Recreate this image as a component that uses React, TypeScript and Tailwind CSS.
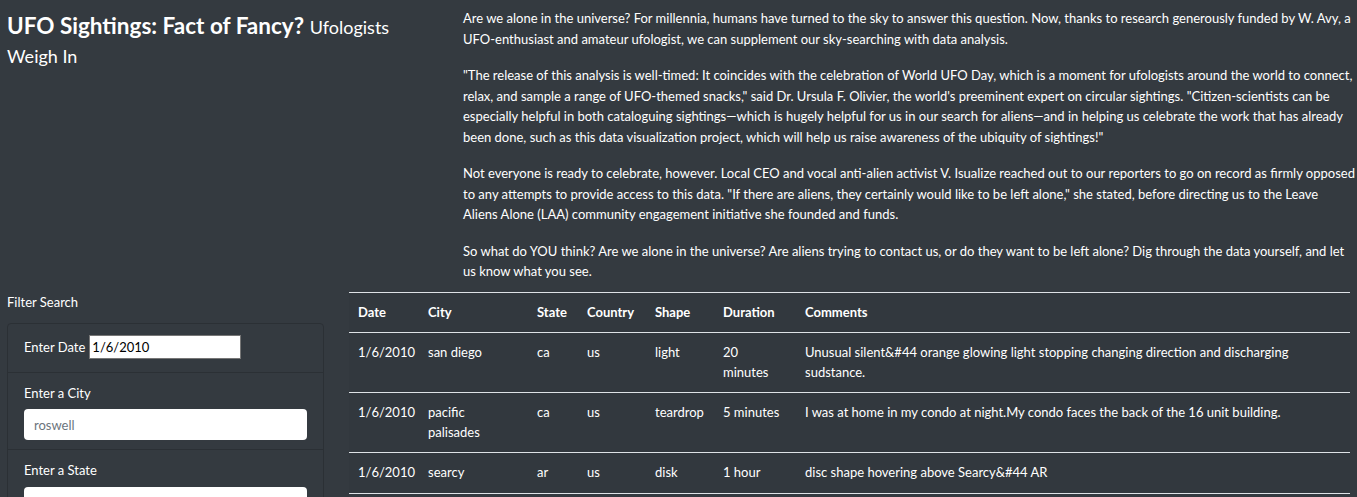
// intro copy, broken where the original page wraps
const paragraphs = [
  [
    "Are we alone in the universe? For millennia, humans have turned to the sky to answer this question. Now, thanks to research generously funded by W. Avy, a",
    "UFO-enthusiast and amateur ufologist, we can supplement our sky-searching with data analysis.",
  ],
  [
    "\"The release of this analysis is well-timed: It coincides with the celebration of World UFO Day, which is a moment for ufologists around the world to connect,",
    "relax, and sample a range of UFO-themed snacks,\" said Dr. Ursula F. Olivier, the world's preeminent expert on circular sightings. \"Citizen-scientists can be",
    "especially helpful in both cataloguing sightings\u2014which is hugely helpful for us in our search for aliens\u2014and in helping us celebrate the work that has already",
    "been done, such as this data visualization project, which will help us raise awareness of the ubiquity of sightings!\"",
  ],
  [
    "Not everyone is ready to celebrate, however. Local CEO and vocal anti-alien activist V. Isualize reached out to our reporters to go on record as firmly opposed",
    "to any attempts to provide access to this data. \"If there are aliens, they certainly would like to be left alone,\" she stated, before directing us to the Leave",
    "Aliens Alone (LAA) community engagement initiative she founded and funds.",
  ],
  [
    "So what do YOU think? Are we alone in the universe? Are aliens trying to contact us, or do they want to be left alone? Dig through the data yourself, and let",
    "us know what you see.",
  ],
];

const sightings = [
  {
    date: "1/6/2010",
    city: "san diego",
    state: "ca",
    country: "us",
    shape: "light",
    duration: "20 minutes",
    comments:
      "Unusual silent&#44 orange glowing light stopping changing direction and discharging sudstance.",
  },
  {
    date: "1/6/2010",
    city: "pacific palisades",
    state: "ca",
    country: "us",
    shape: "teardrop",
    duration: "5 minutes",
    comments: "I was at home in my condo at night.My condo faces the back of the 16 unit building.",
  },
  {
    date: "1/6/2010",
    city: "searcy",
    state: "ar",
    country: "us",
    shape: "disk",
    duration: "1 hour",
    comments: "disc shape hovering above Searcy&#44 AR",
  },
];

const columns = ["Date", "City", "State", "Country", "Shape", "Duration", "Comments"];

export default function App() {
  return (
    <div className="min-h-screen bg-[#343a40] text-white font-['Lato',sans-serif] text-[13px] leading-[1.5]">
      <div className="flex">
        <div className="w-[452px] shrink-0 px-[7px] pt-[12px]">
          <h1 className="max-w-[410px] text-[22.5px] leading-[27px]">
            <span className="font-bold">UFO Sightings: Fact of Fancy?</span>{" "}
            <span className="text-[18px]">Ufologists</span>{" "}
            <span className="text-[18px]">Weigh In</span>
          </h1>
        </div>
        <div className="flex-1 pl-[11px] pr-[7px] pt-[8px]">
          {paragraphs.map((lines, i) => (
            <p key={i} className="leading-[20.5px] mb-[16px] last:mb-0">
              {lines.map((line, j) => (
                <span key={j} className="block whitespace-nowrap">
                  {line}
                </span>
              ))}
            </p>
          ))}
        </div>
      </div>

      <div className="flex mt-[10px]">
        <div className="w-[339px] shrink-0 pl-[7px] pr-[15px]">
          <div className="leading-[20px] mb-[11px]">Filter Search</div>
          <ul className="border border-[#2b3035] rounded-[4px]">
            <li className="px-[16px] pt-[11px] pb-[13px] border-b border-[#2b3035] flex items-center">
              <label className="mr-[4px] mt-[2px]">Enter Date</label>
              <input
                className="w-[152px] h-[24px] bg-white text-black border border-[#767676] px-[2px] outline-none"
                defaultValue="1/6/2010"
              />
            </li>
            <li className="px-[16px] pt-[11px] pb-[9px] border-b border-[#2b3035]">
              <label className="block mb-[6px]">Enter a City</label>
              <input
                className="w-full h-[31px] bg-white rounded-[4px] px-[10px] text-[#495057] placeholder:text-[#6c757d] outline-none"
                placeholder="roswell"
              />
            </li>
            <li className="px-[16px] pt-[11px] pb-[10px]">
              <label className="block mb-[6px]">Enter a State</label>
              <input className="w-full h-[31px] bg-white rounded-[4px] px-[10px] text-[#495057] outline-none" />
            </li>
          </ul>
        </div>

        <div className="flex-1 pl-[10px] pr-[7px]">
          <table className="w-full table-fixed border-collapse bg-[#32383e] leading-[19.5px]">
            <colgroup>
              <col className="w-[70px]" />
              <col className="w-[109px]" />
              <col className="w-[50px]" />
              <col className="w-[68px]" />
              <col className="w-[68px]" />
              <col className="w-[82px]" />
              <col />
            </colgroup>
            <thead>
              <tr className="border-t border-b border-[#dee2e6]">
                {columns.map((c) => (
                  <th key={c} className="text-left font-bold px-[9px] py-[10px] align-top whitespace-nowrap">
                    {c}
                  </th>
                ))}
              </tr>
            </thead>
            <tbody>
              {sightings.map((s, i) => (
                <tr key={i} className="border-b border-[#dee2e6]">
                  <td className="px-[9px] py-[10px] align-top">{s.date}</td>
                  <td className="px-[9px] py-[10px] align-top">{s.city}</td>
                  <td className="px-[9px] py-[10px] align-top">{s.state}</td>
                  <td className="px-[9px] py-[10px] align-top">{s.country}</td>
                  <td className="px-[9px] py-[10px] align-top">{s.shape}</td>
                  <td className="pl-[9px] pr-[16px] py-[10px] align-top">{s.duration}</td>
                  <td className="px-[9px] py-[10px] align-top">{s.comments}</td>
                </tr>
              ))}
            </tbody>
          </table>
        </div>
      </div>
    </div>
  );
}
